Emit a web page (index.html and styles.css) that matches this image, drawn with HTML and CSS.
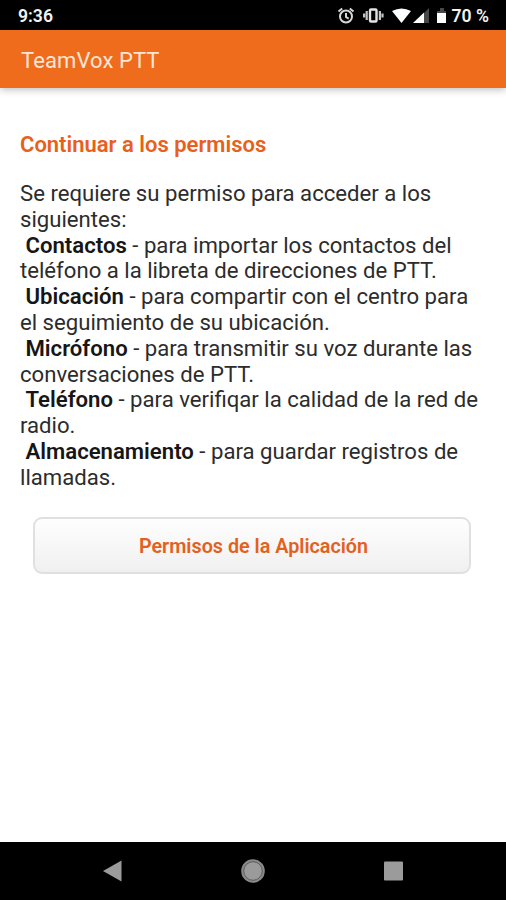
FILE: index.html
```
<!DOCTYPE html>
<html lang="es">
<head>
    <meta charset="UTF-8">
    <meta name="viewport" content="width=device-width, initial-scale=1.0">
    <title>TeamVox PTT</title>
    <link rel="stylesheet" href="styles.css">
</head>
<body>
    <div class="status-bar">
        <span class="time">9:36</span>
        <svg class="status-icons" width="110" height="20" viewBox="0 0 110 20">
            <!-- alarm -->
            <g fill="none" stroke="#d8d8d8" stroke-width="2">
                <circle cx="10" cy="10.500" r="6"/>
                <path d="M10 7v4l2.700 1.600M2.500 5.500l3.700-3M17.500 5.500l-3.700-3"/>
            </g>
            <!-- vibrate -->
            <rect x="34" y="3.500" width="6.500" height="12" rx="1" fill="none" stroke="#e4e4e4" stroke-width="2.400"/>
            <path d="M30.700 5v9M43.900 5v9M28.100 7.500v4M46.500 7.500v4" stroke="#c4c4c4" stroke-width="2.200"/>
            <!-- wifi -->
            <path d="M56 5q9.500-5 19 0L65.500 17z" fill="#fff"/>
            <!-- signal -->
            <path d="M93 2v15h-6V8z" fill="#484848"/>
            <path d="M77 17L88 6.500V17z" fill="#fff"/>
            <!-- battery -->
            <path d="M101 5h3V2h4v3h2v3h-9z" fill="#484848"/>
            <path d="M101 7h9v10h-9z" fill="#fff"/>
        </svg>
        <span class="battery">70 %</span>
    </div>
    <header class="app-bar">TeamVox PTT</header>
    <main class="content">
        <h1>Continuar a los permisos</h1>
        <div class="permissions">
            <p>Se requiere su permiso para acceder a los siguientes:</p>
            <p>&nbsp;<b>Contactos</b> - para importar los contactos del<br>teléfono a la libreta de direcciones de PTT.</p>
            <p>&nbsp;<b>Ubicación</b> - para compartir con el centro para<br>el seguimiento de su ubicación.</p>
            <p>&nbsp;<b>Micrófono</b> - para transmitir su voz durante las<br>conversaciones de PTT.</p>
            <p>&nbsp;<b>Teléfono</b> - para verifiqar la calidad de la red de<br>radio.</p>
            <p>&nbsp;<b>Almacenamiento</b> - para guardar registros de<br>llamadas.</p>
        </div>
        <button class="permissions-btn">Permisos de la Aplicación</button>
    </main>
    <nav class="nav-bar">
        <svg width="24" height="24" viewBox="0 0 24 24">
            <path d="M2 12L20.500 1.500v21z" fill="#9b9b9b"/>
        </svg>
        <svg width="24" height="24" viewBox="0 0 24 24">
            <circle cx="12" cy="12" r="11.800" fill="#8a8a8a"/>
            <circle cx="12" cy="12" r="9.300" fill="#9b9b9b" stroke="#4c4c4c" stroke-width=".8"/>
        </svg>
        <svg width="24" height="24" viewBox="0 0 24 24">
            <rect x="3" y="2.500" width="19" height="19" rx="1" fill="#9b9b9b"/>
        </svg>
    </nav>
</body>
</html>
```

FILE: styles.css
```
body {
    font-family: Roboto, sans-serif;
    display: flex;
    flex-direction: column;
    height: 100vh;
    margin: 0;
    background-color: white;
    color: #2c2c2c;
}
.status-bar {
    display: flex;
    align-items: center;
    height: 30px;
    padding: 1px 17px 0 18px;
    box-sizing: border-box;
    background-color: black;
    color: #f2f2f2;
    font-size: 17.6px;
    font-weight: 600;
}
.status-icons {
    margin-left: auto;
    margin-right: 6px;
}
.app-bar {
    display: flex;
    align-items: center;
    height: 58px;
    padding: 3px 21px 0;
    box-sizing: border-box;
    background-color: #ee6c1b;
    color: #fde6d8;
    font-size: 22px;
    letter-spacing: 0.1px;
    box-shadow: 0 1px 8px rgba(0, 0, 0, 0.3);
}
.content {
    flex: 1;
    padding: 44px 20px 0;
}
h1 {
    margin: 0 0 23px;
    color: #e8601a;
    font-size: 22px;
    font-weight: 600;
    line-height: 26px;
}
.permissions {
    font-size: 22.15px;
    line-height: 25.8px;
    white-space: nowrap;
}
.permissions p {
    margin: 0;
}
.permissions p:first-child {
    white-space: normal;
}
.permissions b {
    font-weight: 600;
    color: #161616;
}
.permissions-btn {
    display: block;
    width: 438px;
    height: 57px;
    margin: 26px 0 0 13px;
    padding: 4px 6px 1px 9px;
    border: 2px solid #e0e0e0;
    border-radius: 9px;
    background: linear-gradient(#fefefe, #f0f0f0);
    color: #e4601c;
    font-family: inherit;
    font-size: 19.75px;
    font-weight: 600;
}
.nav-bar {
    display: flex;
    justify-content: center;
    align-items: center;
    gap: 116px;
    height: 58px;
    background-color: black;
}
```
